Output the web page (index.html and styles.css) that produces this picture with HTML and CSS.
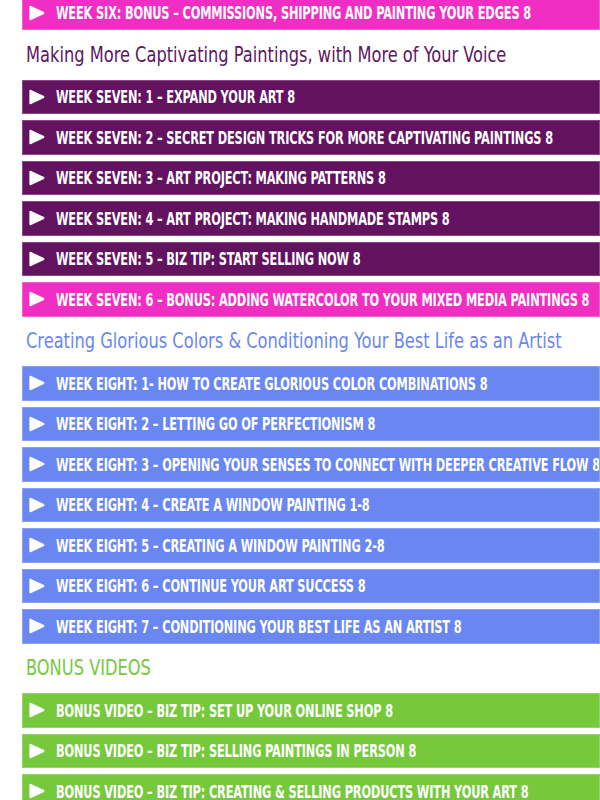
FILE: index.html
```html
<!DOCTYPE html>
<html>
<head>
<meta charset="utf-8">
<link rel="stylesheet" href="styles.css">
</head>
<body>
<div class="page">
  <div class="row pink"><svg class="play" viewBox="0 0 16 16"><path d="M1.6 0.8 L15 7.1 Q15.9 8 15 8.9 L1.6 15.2 Q0.4 15.6 0.4 14.3 L0.4 1.7 Q0.4 0.4 1.6 0.8 Z"/></svg><span class="label">WEEK SIX: BONUS – COMMISSIONS, SHIPPING AND PAINTING YOUR EDGES 8</span></div>

  <h2 class="heading purple-text"><span class="htext">Making More Captivating Paintings, with More of Your Voice</span></h2>
  <div class="row purple"><svg class="play" viewBox="0 0 16 16"><path d="M1.6 0.8 L15 7.1 Q15.9 8 15 8.9 L1.6 15.2 Q0.4 15.6 0.4 14.3 L0.4 1.7 Q0.4 0.4 1.6 0.8 Z"/></svg><span class="label">WEEK SEVEN: 1 – EXPAND YOUR ART 8</span></div>
  <div class="row purple"><svg class="play" viewBox="0 0 16 16"><path d="M1.6 0.8 L15 7.1 Q15.9 8 15 8.9 L1.6 15.2 Q0.4 15.6 0.4 14.3 L0.4 1.7 Q0.4 0.4 1.6 0.8 Z"/></svg><span class="label">WEEK SEVEN: 2 – SECRET DESIGN TRICKS FOR MORE CAPTIVATING PAINTINGS 8</span></div>
  <div class="row purple"><svg class="play" viewBox="0 0 16 16"><path d="M1.6 0.8 L15 7.1 Q15.9 8 15 8.9 L1.6 15.2 Q0.4 15.6 0.4 14.3 L0.4 1.7 Q0.4 0.4 1.6 0.8 Z"/></svg><span class="label">WEEK SEVEN: 3 – ART PROJECT: MAKING PATTERNS 8</span></div>
  <div class="row purple"><svg class="play" viewBox="0 0 16 16"><path d="M1.6 0.8 L15 7.1 Q15.9 8 15 8.9 L1.6 15.2 Q0.4 15.6 0.4 14.3 L0.4 1.7 Q0.4 0.4 1.6 0.8 Z"/></svg><span class="label">WEEK SEVEN: 4 – ART PROJECT: MAKING HANDMADE STAMPS 8</span></div>
  <div class="row purple"><svg class="play" viewBox="0 0 16 16"><path d="M1.6 0.8 L15 7.1 Q15.9 8 15 8.9 L1.6 15.2 Q0.4 15.6 0.4 14.3 L0.4 1.7 Q0.4 0.4 1.6 0.8 Z"/></svg><span class="label">WEEK SEVEN: 5 – BIZ TIP: START SELLING NOW 8</span></div>
  <div class="row pink"><svg class="play" viewBox="0 0 16 16"><path d="M1.6 0.8 L15 7.1 Q15.9 8 15 8.9 L1.6 15.2 Q0.4 15.6 0.4 14.3 L0.4 1.7 Q0.4 0.4 1.6 0.8 Z"/></svg><span class="label">WEEK SEVEN: 6 – BONUS: ADDING WATERCOLOR TO YOUR MIXED MEDIA PAINTINGS 8</span></div>

  <h2 class="heading blue-text"><span class="htext">Creating Glorious Colors &amp; Conditioning Your Best Life as an Artist</span></h2>
  <div class="row blue"><svg class="play" viewBox="0 0 16 16"><path d="M1.6 0.8 L15 7.1 Q15.9 8 15 8.9 L1.6 15.2 Q0.4 15.6 0.4 14.3 L0.4 1.7 Q0.4 0.4 1.6 0.8 Z"/></svg><span class="label">WEEK EIGHT: 1- HOW TO CREATE GLORIOUS COLOR COMBINATIONS 8</span></div>
  <div class="row blue"><svg class="play" viewBox="0 0 16 16"><path d="M1.6 0.8 L15 7.1 Q15.9 8 15 8.9 L1.6 15.2 Q0.4 15.6 0.4 14.3 L0.4 1.7 Q0.4 0.4 1.6 0.8 Z"/></svg><span class="label">WEEK EIGHT: 2 – LETTING GO OF PERFECTIONISM 8</span></div>
  <div class="row blue"><svg class="play" viewBox="0 0 16 16"><path d="M1.6 0.8 L15 7.1 Q15.9 8 15 8.9 L1.6 15.2 Q0.4 15.6 0.4 14.3 L0.4 1.7 Q0.4 0.4 1.6 0.8 Z"/></svg><span class="label">WEEK EIGHT: 3 – OPENING YOUR SENSES TO CONNECT WITH DEEPER CREATIVE FLOW 8</span></div>
  <div class="row blue"><svg class="play" viewBox="0 0 16 16"><path d="M1.6 0.8 L15 7.1 Q15.9 8 15 8.9 L1.6 15.2 Q0.4 15.6 0.4 14.3 L0.4 1.7 Q0.4 0.4 1.6 0.8 Z"/></svg><span class="label">WEEK EIGHT: 4 – CREATE A WINDOW PAINTING 1-8</span></div>
  <div class="row blue"><svg class="play" viewBox="0 0 16 16"><path d="M1.6 0.8 L15 7.1 Q15.9 8 15 8.9 L1.6 15.2 Q0.4 15.6 0.4 14.3 L0.4 1.7 Q0.4 0.4 1.6 0.8 Z"/></svg><span class="label">WEEK EIGHT: 5 – CREATING A WINDOW PAINTING 2-8</span></div>
  <div class="row blue"><svg class="play" viewBox="0 0 16 16"><path d="M1.6 0.8 L15 7.1 Q15.9 8 15 8.9 L1.6 15.2 Q0.4 15.6 0.4 14.3 L0.4 1.7 Q0.4 0.4 1.6 0.8 Z"/></svg><span class="label">WEEK EIGHT: 6 – CONTINUE YOUR ART SUCCESS 8</span></div>
  <div class="row blue"><svg class="play" viewBox="0 0 16 16"><path d="M1.6 0.8 L15 7.1 Q15.9 8 15 8.9 L1.6 15.2 Q0.4 15.6 0.4 14.3 L0.4 1.7 Q0.4 0.4 1.6 0.8 Z"/></svg><span class="label">WEEK EIGHT: 7 – CONDITIONING YOUR BEST LIFE AS AN ARTIST 8</span></div>

  <h2 class="heading green-text"><span class="htext">BONUS VIDEOS</span></h2>
  <div class="row green"><svg class="play" viewBox="0 0 16 16"><path d="M1.6 0.8 L15 7.1 Q15.9 8 15 8.9 L1.6 15.2 Q0.4 15.6 0.4 14.3 L0.4 1.7 Q0.4 0.4 1.6 0.8 Z"/></svg><span class="label">BONUS VIDEO – BIZ TIP: SET UP YOUR ONLINE SHOP 8</span></div>
  <div class="row green"><svg class="play" viewBox="0 0 16 16"><path d="M1.6 0.8 L15 7.1 Q15.9 8 15 8.9 L1.6 15.2 Q0.4 15.6 0.4 14.3 L0.4 1.7 Q0.4 0.4 1.6 0.8 Z"/></svg><span class="label">BONUS VIDEO – BIZ TIP: SELLING PAINTINGS IN PERSON 8</span></div>
  <div class="row green"><svg class="play" viewBox="0 0 16 16"><path d="M1.6 0.8 L15 7.1 Q15.9 8 15 8.9 L1.6 15.2 Q0.4 15.6 0.4 14.3 L0.4 1.7 Q0.4 0.4 1.6 0.8 Z"/></svg><span class="label">BONUS VIDEO – BIZ TIP: CREATING &amp; SELLING PRODUCTS WITH YOUR ART 8</span></div>
</div>
</body>
</html>
```
FILE: styles.css
```css
html, body {
  margin: 0;
  padding: 0;
  background: #ffffff;
  overflow: hidden;
}
.page {
  margin-top: -4.5px;
  padding-left: 22px;
  display: flex;
  flex-direction: column;
  gap: 6px;
  font-family: "DejaVu Sans Condensed", "DejaVu Sans", sans-serif;
  font-stretch: condensed;
}
.row {
  box-sizing: border-box;
  height: 34.5px;
  display: flex;
  align-items: center;
  padding-left: 6px;
  border: 1px solid;
  white-space: nowrap;
  overflow: hidden;
}
.play {
  width: 16px;
  height: 16px;
  flex: none;
  fill: #ffffff;
  margin-right: 11px;
}
.label {
  color: #ffffff;
  font-weight: bold;
  font-size: 18px;
  letter-spacing: -0.2px;
  transform-origin: left center;
  transform: scaleX(0.7);
}
.pink { background: #f02ec3; border-color: #f55fd2; }
.purple { background: #63125f; border-color: #8d4589; }
.blue { background: #6a87f1; border-color: #8aa1f4; }
.green { background: #75c93b; border-color: #93d56a; }
.heading {
  margin: 0;
  height: 37.5px;
  display: flex;
  align-items: center;
  padding-left: 4px;
  font-weight: normal;
  font-size: 21px;
  white-space: nowrap;
}
.htext {
  transform-origin: left center;
  transform: scaleX(0.86);
}
.purple-text { color: #5f1660; }
.blue-text { color: #6a87f1; }
.green-text { color: #75c93b; }
```
